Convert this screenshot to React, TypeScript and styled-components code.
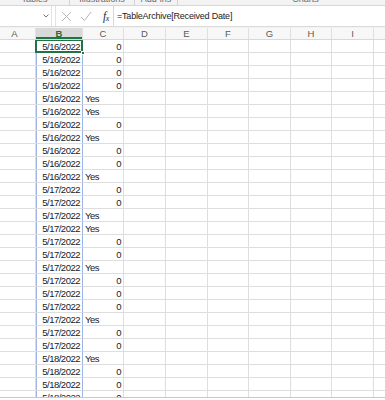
import React from "react";
import styled, { createGlobalStyle } from "styled-components";

const GlobalStyle = createGlobalStyle`
  html, body {
    margin: 0;
    padding: 0;
    background: #ffffff;
  }

  body {
    font-family: "Liberation Sans", Arial, sans-serif;
    color: #222;
  }
`;

// column A is partly scrolled off the left edge of the window
const COLS = [42, 47, 41, 42, 42, 41, 42, 41, 42, 42];
const LETTERS = ["A", "B", "C", "D", "E", "F", "G", "H", "I", "J"];
const TEMPLATE = COLS.map((w) => `${w}px`).join(" ");

const rows: [string, string][] = [
  ["5/16/2022", "0"],
  ["5/16/2022", "0"],
  ["5/16/2022", "0"],
  ["5/16/2022", "0"],
  ["5/16/2022", "Yes"],
  ["5/16/2022", "Yes"],
  ["5/16/2022", "0"],
  ["5/16/2022", "Yes"],
  ["5/16/2022", "0"],
  ["5/16/2022", "0"],
  ["5/16/2022", "Yes"],
  ["5/17/2022", "0"],
  ["5/17/2022", "0"],
  ["5/17/2022", "Yes"],
  ["5/17/2022", "Yes"],
  ["5/17/2022", "0"],
  ["5/17/2022", "0"],
  ["5/17/2022", "Yes"],
  ["5/17/2022", "0"],
  ["5/17/2022", "0"],
  ["5/17/2022", "0"],
  ["5/17/2022", "Yes"],
  ["5/17/2022", "0"],
  ["5/17/2022", "0"],
  ["5/18/2022", "Yes"],
  ["5/18/2022", "0"],
  ["5/18/2022", "0"],
  ["5/18/2022", "0"],
];

const Window = styled.div`
  width: 385px;
  height: 400px;
  overflow: hidden;
  background: #fff;
`;

const Ribbon = styled.div`
  display: flex;
  height: 5px;
  overflow: hidden;
  background: #f3f3f3;
  border-bottom: 1px solid #d6d6d6;
`;

const RibbonGroup = styled.div<{ $w: number }>`
  flex: 0 0 ${(p) => p.$w}px;
  display: flex;
  justify-content: center;
  border-right: 1px solid #d2d2d2;
  box-sizing: border-box;
`;

const RibbonLabel = styled.span`
  margin-top: -5px;
  font-size: 9px;
  line-height: 9px;
  color: #6a6a6a;
  white-space: nowrap;
`;

const FormulaBar = styled.div`
  display: flex;
  height: 20px;
  background: #fff;
  border-bottom: 1px solid #dadada;
`;

const NameBox = styled.div`
  flex: 0 0 52px;
  display: flex;
  align-items: center;
  justify-content: flex-end;
  padding-right: 2px;
  box-sizing: border-box;
  border-right: 1px solid #e3e3e3;
`;

const IconStrip = styled.div`
  flex: 0 0 58px;
  display: flex;
  align-items: center;
  gap: 8px;
  margin-left: 3px;
  padding-left: 5px;
  box-sizing: border-box;
  border-left: 1px solid #e3e3e3;
`;

const Fx = styled.span`
  margin-left: 3px;
  font-family: "Liberation Serif", "Times New Roman", serif;
  font-style: italic;
  font-size: 11.5px;
  color: #2a2a2a;
  letter-spacing: -0.5px;

  sub {
    font-size: 8px;
    vertical-align: -1px;
  }
`;

const FormulaInput = styled.div`
  flex: 1;
  display: flex;
  align-items: center;
  padding-left: 3px;
  border-left: 1px solid #d6d6d6;
  font-size: 9px;
  letter-spacing: -0.2px;
  color: #222;
  white-space: nowrap;
`;

const Spacer = styled.div`
  height: 1px;
  background: #f2f2f2;
`;

const Sheet = styled.div`
  margin-left: -6px;
`;

const HeaderRow = styled.div`
  display: grid;
  grid-template-columns: ${TEMPLATE};
  height: 12px;
  background: #f7f7f7;
  border-bottom: 1px solid #d8d8d8;
  box-sizing: border-box;
`;

const HeaderCell = styled.div<{ $active?: boolean }>`
  display: flex;
  align-items: center;
  justify-content: center;
  font-size: 9.5px;
  color: ${(p) => (p.$active ? "#1e6b3f" : "#5a5a5a")};
  font-weight: ${(p) => (p.$active ? 700 : 400)};
  background: ${(p) => (p.$active ? "#d9d9d9" : "transparent")};
  border-right: 1px solid #e0e0e0;
  box-shadow: ${(p) => (p.$active ? "inset 0 -2px 0 #217346" : "none")};
  box-sizing: border-box;
`;

const Grid = styled.div`
  display: grid;
  grid-template-columns: ${TEMPLATE};
  grid-auto-rows: 13px;
  height: 357px;
  overflow: hidden;
  border-bottom: 1px solid #c8c8c8;
`;

const Cell = styled.div<{ $align?: "left" | "right"; $selectedCol?: boolean; $active?: boolean }>`
  position: relative;
  display: flex;
  align-items: center;
  justify-content: ${(p) => (p.$align === "left" ? "flex-start" : "flex-end")};
  padding: 0 2px;
  box-sizing: border-box;
  border-right: 1px solid ${(p) => (p.$selectedCol ? "#9fb4e2" : "#dedede")};
  border-bottom: 1px solid #dedede;
  font-size: 9.5px;
  letter-spacing: -0.5px;
  color: #1a1a1a;
  white-space: nowrap;
  box-shadow: ${(p) => (p.$selectedCol ? "inset 1px 0 0 #9fb4e2" : "none")};

  ${(p) =>
    p.$active &&
    `
    &::after {
      content: "";
      position: absolute;
      left: -1px;
      top: -1px;
      right: -1px;
      bottom: -1px;
      border: 2px solid #217346;
      pointer-events: none;
    }
    &::before {
      content: "";
      position: absolute;
      right: -3px;
      bottom: -3px;
      width: 4px;
      height: 4px;
      background: #217346;
      border: 1px solid #fff;
      box-sizing: border-box;
      z-index: 2;
    }
  `}
`;

const Cross = () => (
  <svg width="11" height="11" viewBox="0 0 11 11">
    <path d="M1 1 L10 10 M10 1 L1 10" stroke="#b5b5b5" strokeWidth="1" fill="none" />
  </svg>
);

const Check = () => (
  <svg width="12" height="11" viewBox="0 0 12 11">
    <path d="M1 6 L4.5 9.5 L11 1" stroke="#b5b5b5" strokeWidth="1" fill="none" />
  </svg>
);

const Chevron = () => (
  <svg width="6" height="4" viewBox="0 0 6 4">
    <path d="M0.5 0.5 L3 3 L5.5 0.5" stroke="#777" strokeWidth="1" fill="none" />
  </svg>
);

export default function App() {
  return (
    <>
      <GlobalStyle />
      <Window>
        <Ribbon>
          <RibbonGroup $w={70}>
            <RibbonLabel>Tables</RibbonLabel>
          </RibbonGroup>
          <RibbonGroup $w={65}>
            <RibbonLabel>Illustrations</RibbonLabel>
          </RibbonGroup>
          <RibbonGroup $w={43}>
            <RibbonLabel>Add-ins</RibbonLabel>
          </RibbonGroup>
          <RibbonGroup $w={256}>
            <RibbonLabel>Charts</RibbonLabel>
          </RibbonGroup>
        </Ribbon>

        <FormulaBar>
          <NameBox>
            <Chevron />
          </NameBox>
          <IconStrip>
            <Cross />
            <Check />
            <Fx>
              f<sub>x</sub>
            </Fx>
          </IconStrip>
          <FormulaInput>=TableArchive[Received Date]</FormulaInput>
        </FormulaBar>
        <Spacer />

        <Sheet>
          <HeaderRow>
            {LETTERS.map((l) => (
              <HeaderCell key={l} $active={l === "B"}>
                {l}
              </HeaderCell>
            ))}
          </HeaderRow>

          <Grid>
            {rows.map(([date, flag], i) => (
              <React.Fragment key={i}>
                <Cell />
                <Cell $selectedCol $active={i === 0}>
                  {date}
                </Cell>
                <Cell $align={flag === "Yes" ? "left" : "right"}>{flag}</Cell>
                {LETTERS.slice(3).map((l) => (
                  <Cell key={l} />
                ))}
              </React.Fragment>
            ))}
          </Grid>
        </Sheet>
      </Window>
    </>
  );
}
